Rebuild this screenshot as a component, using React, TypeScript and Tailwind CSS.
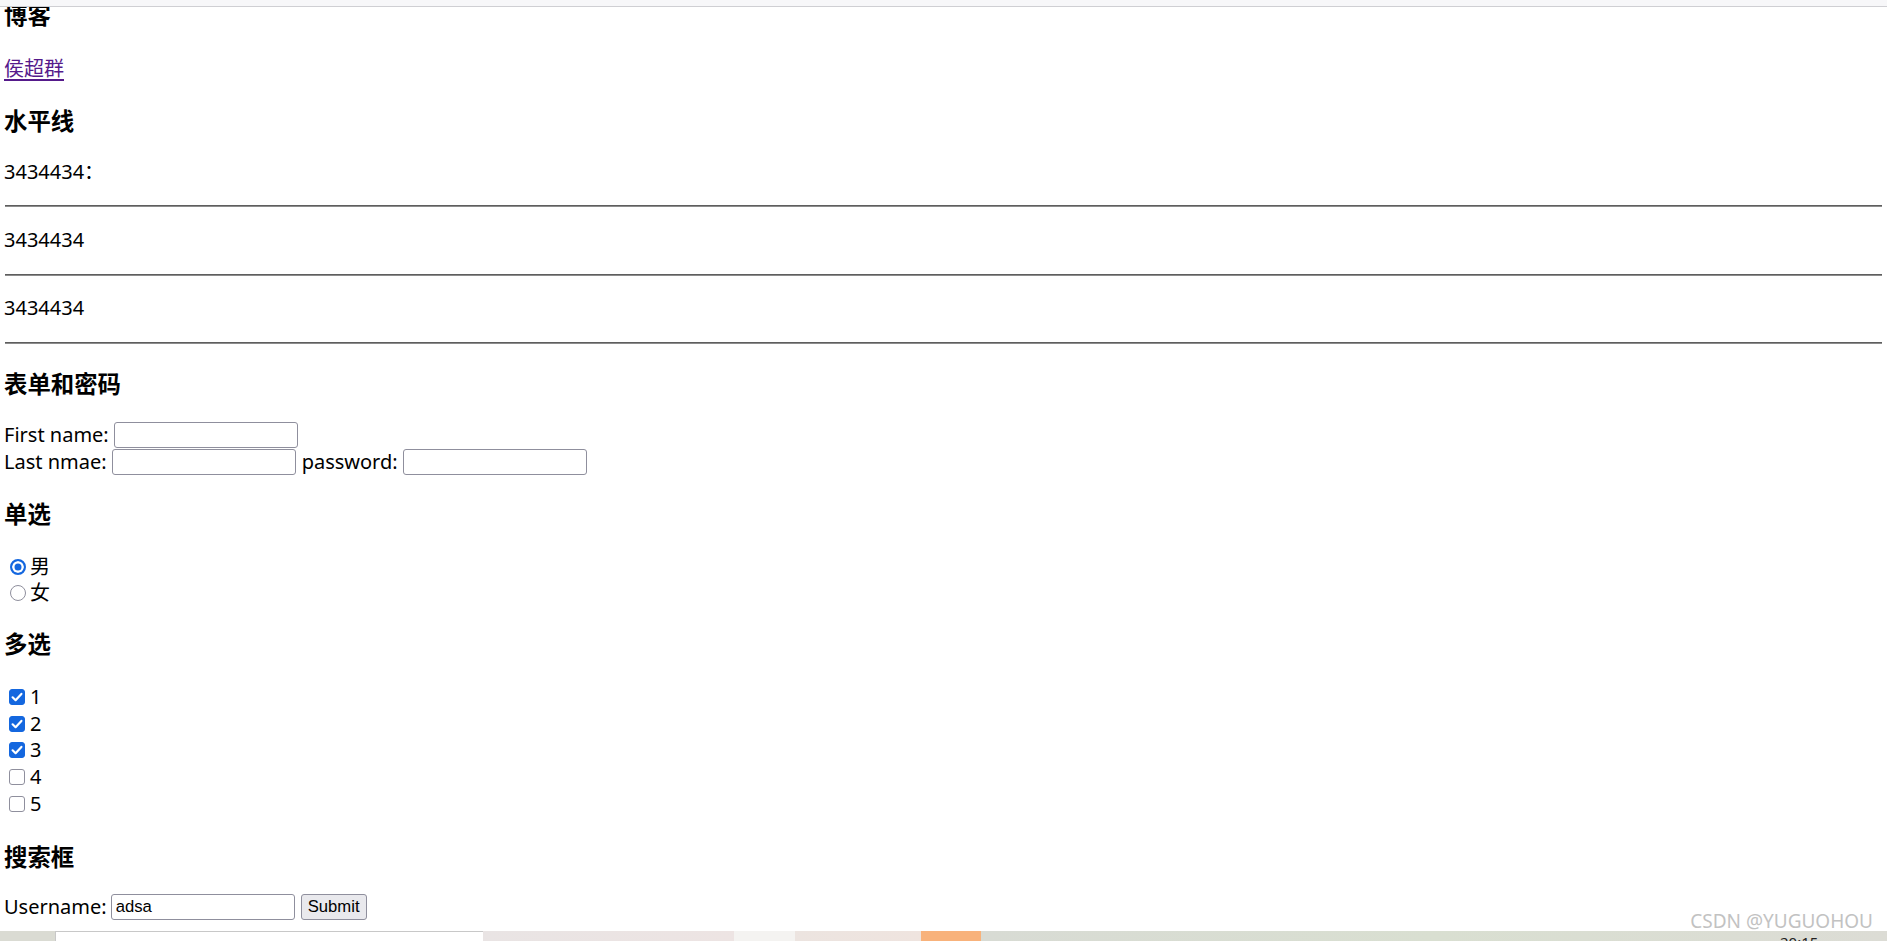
import React from "react";

function Check({ checked }: { checked: boolean }) {
  return (
    <span className="relative ml-[5px] mr-[5px] flex h-[16px] w-[16px] shrink-0">
      <input
        type="checkbox"
        defaultChecked={checked}
        className="m-0 h-[16px] w-[16px] appearance-none rounded-[3px] border border-[#8f8f9d] bg-white checked:border-[#1467df] checked:bg-[#1467df]"
      />
      {checked && (
        <svg
          viewBox="0 0 16 16"
          className="pointer-events-none absolute left-0 top-0 h-[16px] w-[16px]"
        >
          <path d="M3.6 8.3 L6.6 11.2 L12.4 4.9" fill="none" stroke="white" strokeWidth="2.2" strokeLinecap="round" strokeLinejoin="round" />
        </svg>
      )}
    </span>
  );
}

function Radio({ checked }: { checked: boolean }) {
  return (
    <input
      type="radio"
      name="sex"
      defaultChecked={checked}
      className="m-0 ml-[6px] mr-[4px] h-[16px] w-[16px] shrink-0 appearance-none rounded-full border-[1.5px] border-[#8f8f9d] bg-white checked:border-[2px] checked:border-[#1467df] checked:bg-[#1467df] checked:shadow-[inset_0_0_0_2.5px_white]"
    />
  );
}

const inputCls =
  "h-[26px] w-[184px] shrink-0 rounded-[3px] border border-[#8f8f9d] bg-white px-[4px] font-['Liberation_Sans',Arial,sans-serif] text-[16.67px] leading-[20px] text-black outline-none";

export default function App() {
  return (
    <div className="relative flex h-[941px] w-[1887px] flex-col overflow-hidden bg-white font-['Noto_Sans','Noto_Sans_CJK_SC',sans-serif] text-black">
      <div className="h-[7px] shrink-0 border-b border-[#cfcfd3] bg-[#f7f7f9]" />

      <main className="min-h-0 flex-1 overflow-hidden pl-[4px] pr-[5px]">
        <h3 className="-mt-[7px] h-[31px] text-[23.4px] font-bold leading-[31px]">博客</h3>
        <p className="mt-[25px] h-[26px] text-[20px] leading-[26px]">
          <a href="#" className="text-[#551a8b] underline underline-offset-[3px]">
            侯超群
          </a>
        </p>

        <h3 className="mt-[24px] h-[31px] text-[23.4px] font-bold leading-[31px]">水平线</h3>
        <p className="mt-[22px] h-[26px] text-[20px] leading-[26px]">3434434：</p>
        <hr className="ml-[1px] mt-[20px] h-0 border-t border-b border-t-[#5e5e5e] border-b-[#8c8c8c]" />
        <p className="mt-[20px] h-[26px] text-[20px] leading-[26px]">3434434</p>
        <hr className="ml-[1px] mt-[21px] h-0 border-t border-b border-t-[#5e5e5e] border-b-[#8c8c8c]" />
        <p className="mt-[19px] h-[26px] text-[20px] leading-[26px]">3434434</p>
        <hr className="ml-[1px] mt-[21px] h-0 border-t border-b border-t-[#5e5e5e] border-b-[#8c8c8c]" />

        <h3 className="mt-[25px] h-[31px] text-[23.4px] font-bold leading-[31px]">表单和密码</h3>
        <form className="mt-[21px] text-[20px] leading-[26px]">
          <div className="flex h-[27px] items-center gap-[5px]">
            <span>First name:</span>
            <input type="text" className={inputCls} />
          </div>
          <div className="flex h-[27px] items-center gap-[5px]">
            <span>Last nmae:</span>
            <input type="text" className={inputCls} />
            <span className="ml-[1px]">password:</span>
            <input type="password" className={inputCls} />
          </div>
        </form>

        <h3 className="mt-[23.5px] h-[31px] text-[23.4px] font-bold leading-[31px]">单选</h3>
        <div className="mt-[24.5px] text-[20px] leading-[26px]">
          <label className="flex h-[26px] items-center">
            <Radio checked={true} />
            <span>男</span>
          </label>
          <label className="flex h-[26px] items-center">
            <Radio checked={false} />
            <span>女</span>
          </label>
        </div>

        <h3 className="mt-[23px] h-[31px] text-[23.4px] font-bold leading-[31px]">多选</h3>
        <div className="mt-[23.6px] text-[20px] leading-[26px]">
          {[
            ["1", true],
            ["2", true],
            ["3", true],
            ["4", false],
            ["5", false],
          ].map(([label, c]) => (
            <label key={label as string} className="flex h-[26.75px] items-center">
              <Check checked={c as boolean} />
              <span>{label as string}</span>
            </label>
          ))}
        </div>

        <h3 className="mt-[24.5px] h-[31px] text-[23.4px] font-bold leading-[31px]">搜索框</h3>
        <form className="mt-[21.5px] flex h-[26px] items-center gap-[4px] text-[20px] leading-[26px]">
          <span>Username:</span>
          <input type="text" defaultValue="adsa" className={inputCls} />
          <button
            type="button"
            className="ml-[2px] h-[26px] rounded-[3px] border border-[#8f8f9d] bg-[#e9e9ed] px-[6px] font-['Liberation_Sans',Arial,sans-serif] text-[16.67px] leading-[20px] text-black"
          >
            Submit
          </button>
        </form>
      </main>

      <div className="flex h-[10px] shrink-0 overflow-hidden">
        <div className="w-[55px] bg-[#dadbd3]" />
        <div className="w-[428px] border-t border-l border-[#c8c8c8] bg-white" />
        <div className="w-[251px] bg-gradient-to-r from-[#e9e4e4] to-[#ede4e3]" />
        <div className="w-[61px] bg-[#f4f3f1]" />
        <div className="w-[126px] bg-gradient-to-r from-[#ece4e0] to-[#efe4df]" />
        <div className="w-[60px] bg-[#f8b27b]" />
        <div className="flex-1 bg-gradient-to-r from-[#d8dbd4] via-[#d9dfd1] to-[#dcdcd5] pl-[799px] pt-[4px] font-['Noto_Sans',sans-serif] text-[15px] leading-none text-[#222]">
          20:15
        </div>
      </div>

      <span className="absolute right-[14px] top-[912px] font-['Noto_Sans',sans-serif] text-[19px] leading-[19px] text-[#c2c2c2]">
        CSDN @YUGUOHOU
      </span>
    </div>
  );
}
